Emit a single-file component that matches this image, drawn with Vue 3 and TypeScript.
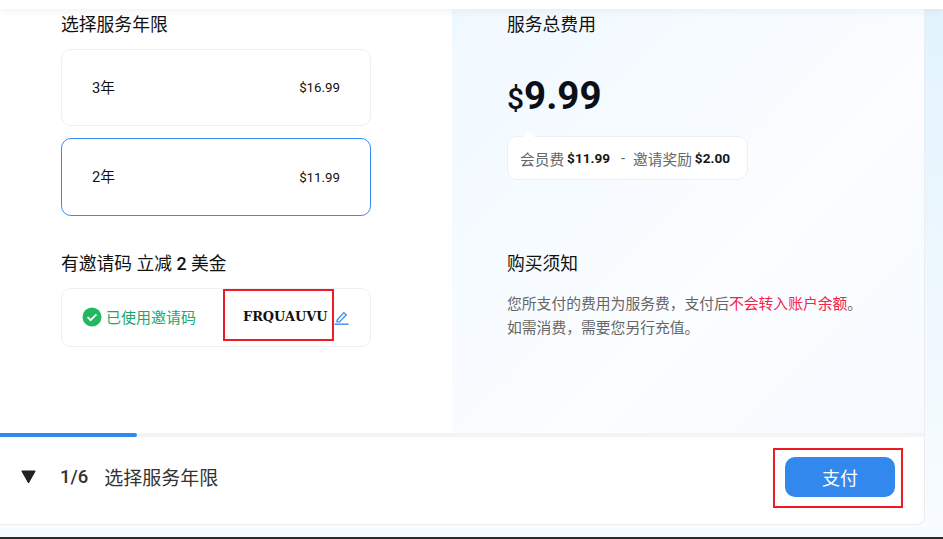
<script setup lang="ts">
interface PlanOption {
  label: string;
  price: string;
  active: boolean;
}

const plans: PlanOption[] = [
  { label: '3年', price: '$16.99', active: false },
  { label: '2年', price: '$11.99', active: true },
];
</script>

<template>
  <div class="page">
    <div class="topbar"></div>
    <div class="card">
      <div class="columns">
        <section class="left">
          <h3 class="title">选择服务年限</h3>
          <div class="plans">
            <div v-for="plan in plans" :key="plan.label" class="plan" :class="{ active: plan.active }">
              <span class="plan-label">{{ plan.label }}</span>
              <span class="plan-price">{{ plan.price }}</span>
            </div>
          </div>
          <h3 class="title invite-title">有邀请码 立减 <b class="num">2</b> 美金</h3>
          <div class="invite">
            <svg class="check" width="20" height="20" viewBox="0 0 20 20">
              <circle cx="10" cy="10" r="9.5" fill="#23b860" />
              <path d="M5.6 10.2l3 3 5.8-5.8" fill="none" stroke="#fff" stroke-width="1.8" />
            </svg>
            <span class="invite-used">已使用邀请码</span>
            <span class="code-box">
              <span class="code">FRQUAUVU</span>
            </span>
            <svg class="edit" width="15" height="15" viewBox="0 0 15 15">
              <path d="M3 10.2L9.8 2.6l2.5 2.2-6.8 7.1H3z" fill="none" stroke="#3d8bf0" stroke-width="1.3" />
              <path d="M0.5 14.2h14" fill="none" stroke="#3d8bf0" stroke-width="1.4" />
            </svg>
          </div>
        </section>
        <section class="right">
          <h3 class="title">服务总费用</h3>
          <div class="total"><span class="dollar">$</span>9.99</div>
          <div class="bill">
            <span class="bill-text">会员费</span>
            <b class="bill-num">$11.99</b>
            <span class="bill-minus">-</span>
            <span class="bill-text">邀请奖励</span>
            <b class="bill-num">$2.00</b>
          </div>
          <h3 class="title notice-title">购买须知</h3>
          <p class="notice">
            您所支付的费用为服务费，支付后<span class="warn">不会转入账户余额</span>。<br />如需消费，需要您另行充值。
          </p>
        </section>
      </div>
      <div class="progress"><div class="progress-bar" :style="{ width: '137px' }"></div></div>
      <footer class="footer">
        <svg class="caret" width="15" height="13" viewBox="0 0 15 13">
          <path d="M1.2 1.2h12.6L7.5 12.4z" fill="#222" stroke="#222" stroke-width="1.4" stroke-linejoin="round" />
        </svg>
        <span class="step">1/6</span>
        <span class="step-name">选择服务年限</span>
        <span class="pay-box">
          <button class="pay" type="button">支付</button>
        </span>
      </footer>
    </div>
  </div>
</template>

<style scoped>
.page {
  width: 943px;
  height: 539px;
  overflow: hidden;
  display: flex;
  flex-direction: column;
  position: relative;
  background: linear-gradient(180deg, #e2f3fe 0%, #f8fcff 100%);
  border-bottom: 2px solid #2b2b2b;
  box-sizing: border-box;
  font-family: Roboto, "Noto Sans CJK SC", sans-serif;
  color: #111;
}

.topbar {
  height: 9px;
  flex: none;
  background: #fff;
  box-shadow: 0 2px 8px rgba(0, 0, 0, 0.06);
  position: relative;
  z-index: 2;
}

.card {
  width: 925px;
  height: 516px;
  flex: none;
  box-sizing: border-box;
  display: flex;
  flex-direction: column;
  background: #fff;
  border-right: 1px solid #ebedf0;
  border-bottom: 1px solid #ebedf0;
  border-bottom-right-radius: 8px;
}

.columns {
  height: 424px;
  flex: none;
  display: flex;
}

.left {
  width: 452px;
  flex: none;
  box-sizing: border-box;
  padding: 4px 0 0 61px;
}

.right {
  flex: 1;
  box-sizing: border-box;
  padding: 4px 0 0 55px;
  background: linear-gradient(135deg, #f0f9ff 0%, #fbfdff 60%, #f7fbff 100%);
}

.title {
  margin: 0;
  font-size: 17.8px;
  font-weight: 400;
  line-height: 24px;
}

.plans {
  margin-top: 12px;
  width: 310px;
  display: flex;
  flex-direction: column;
  gap: 12px;
}

.plan {
  height: 77px;
  box-sizing: border-box;
  padding: 0 30px;
  display: flex;
  align-items: center;
  justify-content: space-between;
  border: 1px solid #edeff2;
  border-radius: 10px;
}

.plan.active {
  height: 78px;
  border-color: #3a8bee;
}

.plan-label {
  font-size: 14.7px;
  padding-bottom: 3px;
}

.plan-price {
  font-size: 13.3px;
}

.invite-title {
  margin-top: 36px;
}

.num {
  font-weight: 500;
}

.invite {
  margin-top: 12px;
  width: 310px;
  height: 59px;
  box-sizing: border-box;
  border: 1px solid #edeff2;
  border-radius: 10px;
  padding: 0 0 2px 20px;
  display: flex;
  align-items: center;
}

.check {
  flex: none;
}

.invite-used {
  margin-left: 4px;
  font-size: 15px;
  color: #1aa86c;
}

.code-box {
  position: absolute;
  left: 223px;
  top: 289px;
  width: 111px;
  height: 52px;
  box-sizing: border-box;
  border: 2px solid #ed1c24;
  display: flex;
  align-items: center;
  padding: 3px 0 0 18px;
}

.code {
  font-family: "DejaVu Serif", serif;
  font-size: 12.9px;
  font-weight: 700;
}

.edit {
  position: absolute;
  left: 334px;
  top: 310px;
}

.total {
  margin-top: 34px;
  font-size: 38.5px;
  font-weight: 700;
  line-height: 50px;
  color: #0b0f17;
}

.dollar {
  font-size: 30px;
  font-weight: 500;
}

.bill {
  margin-top: 12px;
  width: 241px;
  height: 44px;
  box-sizing: border-box;
  padding-left: 12px;
  display: flex;
  align-items: center;
  background: #fff;
  border: 1px solid #eef0f3;
  border-radius: 10px;
  font-size: 14.7px;
  position: relative;
  white-space: nowrap;
}

.bill::before {
  content: "";
  position: absolute;
  left: 15px;
  top: -7px;
  border-left: 6px solid transparent;
  border-right: 6px solid transparent;
  border-bottom: 7px solid #fff;
}

.bill-text {
  color: #666;
}

.bill-num {
  margin-left: 3px;
  font-size: 13.6px;
  font-weight: 700;
  color: #14171c;
}

.bill-minus {
  margin: 0 8px 0 11px;
  color: #666;
}

.notice-title {
  margin-top: 72px;
}

.notice {
  margin: 16px 0 0;
  font-size: 14.8px;
  line-height: 24px;
  color: #666;
  white-space: nowrap;
}

.warn {
  color: #f5224a;
}

.progress {
  height: 4px;
  flex: none;
  background: #f3f4f5;
}

.progress-bar {
  height: 100%;
  background: #3388ee;
  border-radius: 0 2px 2px 0;
}

.footer {
  flex: 1;
  display: flex;
  align-items: center;
  padding: 0 0 8px 21px;
}

.caret {
  flex: none;
}

.step {
  margin-left: 24px;
  font-size: 18.5px;
  font-weight: 500;
  color: #333;
}

.step-name {
  margin-left: 16px;
  font-size: 19px;
  color: #333;
}

.pay-box {
  position: absolute;
  left: 773px;
  top: 448px;
  width: 130px;
  height: 60px;
  box-sizing: border-box;
  border: 2px solid #ed1c24;
  padding: 7px 0 0 10px;
}

.pay {
  display: block;
  width: 110px;
  height: 40px;
  border: 0;
  border-radius: 10px;
  background: #3388ee;
  color: #fff;
  font-family: inherit;
  font-size: 18px;
}
</style>
